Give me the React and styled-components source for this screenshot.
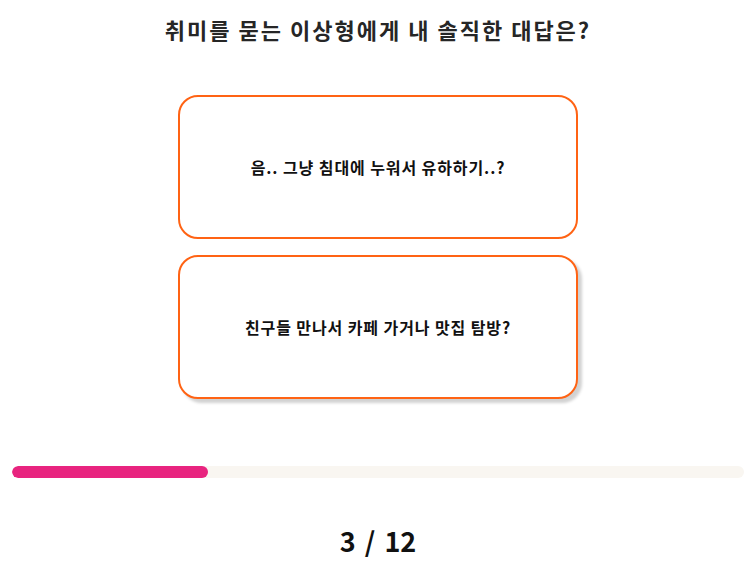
import React, { useState } from "react";
import styled, { createGlobalStyle } from "styled-components";

const GlobalStyle = createGlobalStyle`
  body {
    margin: 0;
    background: #ffffff;
    font-family: "Noto Sans CJK KR", "Noto Sans", sans-serif;
  }
`;

const Page = styled.div`
  width: 756px;
  display: flex;
  flex-direction: column;
  align-items: center;
`;

const Title = styled.h1`
  margin: 0;
  height: 58px;
  display: flex;
  align-items: center;
  font-size: 22px;
  font-weight: 700;
  letter-spacing: 2px;
  color: #262626;
`;

const Choices = styled.div`
  margin-top: 37px;
  display: flex;
  flex-direction: column;
  gap: 16px;
`;

const Choice = styled.button`
  box-sizing: border-box;
  width: 400px;
  height: 144px;
  border: 2px solid #ff6314;
  border-radius: 20px;
  background: #ffffff;
  font-family: inherit;
  font-size: 16px;
  font-weight: 700;
  letter-spacing: 0.9px;
  color: #111111;
  cursor: pointer;
  box-shadow: ${(p) => (p.$hover ? "4px 4px 3px rgba(0, 0, 0, 0.18)" : "none")};
`;

const Track = styled.div`
  margin-top: 67px;
  width: 732px;
  height: 12px;
  border-radius: 6px;
  background: #f9f6f1;
  overflow: hidden;
`;

const Fill = styled.div`
  height: 100%;
  border-radius: 6px;
  background: #e8247f;
`;

const Counter = styled.div`
  margin-top: 43px;
  line-height: 40px;
  font-size: 27px;
  font-weight: 700;
  word-spacing: 3px;
  color: #111111;
`;

const answers = [
  "음.. 그냥 침대에 누워서 유하하기..?",
  "친구들 만나서 카페 가거나 맛집 탐방?",
];

export default function App() {
  const [hover, setHover] = useState(1);
  const step = 3;
  const total = 12;

  return (
    <Page>
      <GlobalStyle />
      <Title>취미를 묻는 이상형에게 내 솔직한 대답은?</Title>
      <Choices>
        {answers.map((a, i) => (
          <Choice
            key={a}
            type="button"
            $hover={hover === i}
            onMouseEnter={() => setHover(i)}
          >
            {a}
          </Choice>
        ))}
      </Choices>
      <Track>
        <Fill style={{ width: `${(step / total) * 100 + 1.8}%` }} />
      </Track>
      <Counter>
        {step} / {total}
      </Counter>
    </Page>
  );
}
